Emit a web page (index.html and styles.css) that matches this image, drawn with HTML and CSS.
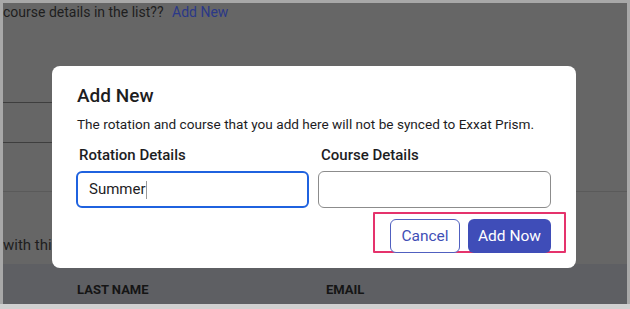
FILE: index.html
```html
<!DOCTYPE html>
<html lang="en">
<head>
    <meta charset="UTF-8">
    <meta name="viewport" content="width=device-width, initial-scale=1.0">
    <title>Add New</title>
    <link rel="stylesheet" href="styles.css">
</head>
<body>
    <div class="screen">
        <div class="hint">course details in the list?? <a class="hint-link">Add New</a></div>
        <div class="field-lines">
            <div class="line"></div>
            <div class="line"></div>
        </div>
        <div class="divider"></div>
        <div class="note">with this</div>
        <div class="table-head">
            <div class="col col-name">LAST NAME</div>
            <div class="col">EMAIL</div>
        </div>

        <div class="modal">
            <div class="modal-title">Add New</div>
            <div class="modal-text">The rotation and course that you add here will not be synced to Exxat Prism.</div>
            <div class="fields">
                <div class="field">
                    <div class="label">Rotation Details</div>
                    <div class="input focused">Summer<span class="caret"></span></div>
                </div>
                <div class="field">
                    <div class="label">Course Details</div>
                    <div class="input"></div>
                </div>
            </div>
            <div class="actions">
                <div class="highlight">
                    <button class="btn btn-outline">Cancel</button>
                    <button class="btn btn-primary">Add Now</button>
                </div>
            </div>
        </div>
    </div>
</body>
</html>
```

FILE: styles.css
```css
body {
    margin: 0;
    background-color: #d0d0d0;
    font-family: Roboto, "Liberation Sans", sans-serif;
}
.screen {
    position: relative;
    width: 624px;
    height: 301px;
    border: 3px solid #a8a8a8;
    border-bottom: none;
    background-color: #666666;
    overflow: hidden;
    display: flex;
    flex-direction: column;
}
.hint {
    height: 24px;
    line-height: 19px;
    font-size: 14px;
    color: #1e1e1e;
    white-space: nowrap;
}
.hint-link {
    margin-left: 5px;
    color: #2b3888;
}
.field-lines {
    width: 60px;
    margin-top: 75px;
}
.line {
    height: 1px;
    background-color: #3e3e3e;
    margin-bottom: 39px;
}
.divider {
    height: 1px;
    background-color: #5a5a5a;
    margin-top: 9px;
}
.note {
    margin-top: 43px;
    font-size: 15px;
    line-height: 20px;
    color: #1e1e1e;
}
.table-head {
    margin-top: auto;
    height: 40px;
    background-color: #5e5f63;
    display: flex;
    align-items: center;
    padding-top: 11px;
    box-sizing: border-box;
    font-size: 13px;
    font-weight: 700;
    color: #151515;
}
.col-name {
    margin-left: 74px;
    width: 249px;
}

/* dialog over the page */
.modal {
    position: absolute;
    left: 49px;
    top: 63px;
    width: 524px;
    height: 202px;
    box-sizing: border-box;
    padding: 18px 25px 0 24px;
    background-color: #fff;
    border-radius: 8px;
    color: #1d1d1f;
}
.modal-title {
    font-size: 19px;
    font-weight: 500;
    line-height: 24px;
    padding-left: 1px;
}
.modal-text {
    margin-top: 6px;
    font-size: 13.6px;
    line-height: 20px;
    padding-left: 1px;
}
.fields {
    display: flex;
    gap: 9px;
    margin-top: 11px;
}
.field {
    flex: 1;
}
.label {
    font-size: 15px;
    font-weight: 500;
    line-height: 20px;
    padding-left: 3px;
}
.input {
    margin-top: 6px;
    height: 37px;
    box-sizing: border-box;
    border: 1px solid #8c8c8c;
    border-radius: 6px;
    padding-left: 12px;
    font-size: 15px;
    line-height: 35px;
    display: flex;
    align-items: center;
}
.input.focused {
    border: 2px solid #1f62df;
    padding-left: 11px;
}
.caret {
    width: 1px;
    height: 18px;
    background-color: #9a9a9a;
}
.actions {
    display: flex;
    justify-content: flex-end;
    margin-top: 4px;
    margin-right: -15px;
}
.highlight {
    display: flex;
    gap: 8px;
    padding: 5px 13px 0 15px;
    height: 41px;
    box-sizing: border-box;
    border: 2px solid #e5336c;
    border-radius: 1px;
}
.btn {
    height: 34px;
    font-family: inherit;
    font-size: 15.5px;
    border-radius: 6px;
    cursor: pointer;
}
.btn-outline {
    width: 70px;
    background: #fff;
    color: #3f4fb6;
    border: 1px solid #5060c0;
}
.btn-primary {
    width: 83px;
    background: #3f4db8;
    color: #fff;
    border: none;
}
```
